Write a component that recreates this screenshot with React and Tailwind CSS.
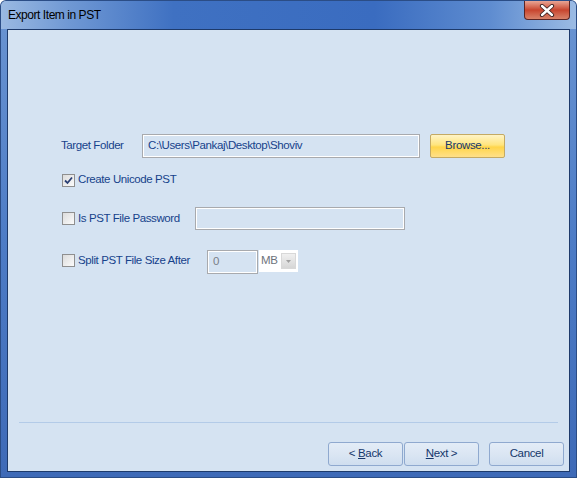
const font = { fontFamily: '"Liberation Sans", Arial, sans-serif' };

const CheckBox = ({ checked }) => (
  <span className="w-[13px] h-[13px] border border-[#8f8f8f] bg-gradient-to-br from-[#dcdcdc] to-[#fbfbfb] flex items-center justify-center shrink-0">
    {checked && (
      <svg width="9" height="9" viewBox="0 0 9 9">
        <path d="M1 4.5 L3.5 7 L8 1.5" fill="none" stroke="#2a3f74" strokeWidth="1.8" />
      </svg>
    )}
  </span>
);

const NavButton = ({ children, className = '' }) => (
  <button className={`h-[24px] w-[75px] rounded-[3px] border border-[#8fa9cf] bg-gradient-to-b from-[#e3ecf7] via-[#dbe6f3] to-[#cfdeef] text-[11.5px] tracking-[-0.35px] text-[#15376b] ${className}`}>
    {children}
  </button>
);

export default function App() {
  return (
    <div style={font} className="w-[577px] h-[478px] flex flex-col bg-[#2b4d86] p-px rounded-t-[6px]">
      <div className="flex-1 flex flex-col rounded-t-[5px] bg-gradient-to-b from-[#6b95d2] via-[#4d7cc6] to-[#3e6ab7]">
        {/* title bar */}
        <div className="h-[28px] flex items-start bg-[linear-gradient(90deg,#9ab9e2_0%,#6f98d4_12%,#3f71c2_30%,#3a6cc0_65%,#5e8cd0_85%,#9bbbe4_100%)] rounded-t-[5px]">
          <span className="pl-[7px] pt-[5px] text-[12px] tracking-[-0.45px] text-black">Export Item in PST</span>
          <div className="ml-auto mr-[6px] w-[46px] h-[19px] rounded-b-[4px] border border-t-0 border-[#5b2525] bg-gradient-to-b from-[#e8a595] via-[#c8442e] to-[#d8826a] flex items-center justify-center">
            <svg width="16" height="13" viewBox="0 0 16 13">
              <path d="M3 2 L13 11 M13 2 L3 11" stroke="#3a2020" strokeWidth="4.2" strokeLinecap="round" />
              <path d="M3 2 L13 11 M13 2 L3 11" stroke="#ffffff" strokeWidth="2.4" strokeLinecap="round" />
            </svg>
          </div>
        </div>
        {/* client */}
        <div className="flex-1 mx-[6px] mb-[5px] border border-[#1d3a6b] bg-[#d5e3f2] flex flex-col text-[11.5px] tracking-[-0.4px] text-[#15428b]">
          <div className="h-[104px]" />
          <div className="flex items-center h-[24px] pl-[53px]">
            <span className="w-[81px]">Target Folder</span>
            <div className="w-[278px] h-[24px] border border-[#a8aaae] bg-[#d5e3f2] flex items-center pl-[5px] shadow-[inset_0_0_0_1px_#ffffff]">
              C:\Users\Pankaj\Desktop\Shoviv
            </div>
            <button className="ml-[10px] w-[75px] h-[24px] rounded-[2px] border border-[#c4aa64] bg-[linear-gradient(180deg,#fff4c6_0%,#ffe57e_45%,#ffd54a_55%,#ffe08a_100%)] text-[#15376b] text-[11.5px] tracking-[-0.35px]">
              Browse...
            </button>
          </div>
          <div className="flex items-center gap-[3px] pl-[54px] mt-[15px] h-[14px]">
            <CheckBox checked />
            <span>Create Unicode PST</span>
          </div>
          <div className="flex items-center pl-[54px] mt-[20px] h-[23px]">
            <div className="flex items-center gap-[3px] w-[133px]">
              <CheckBox />
              <span>Is PST File Password</span>
            </div>
            <div className="w-[210px] h-[23px] border border-[#a8aaae] bg-[#d5e3f2] shadow-[inset_0_0_0_1px_#ffffff]" />
          </div>
          <div className="flex items-start pl-[54px] mt-[20px] h-[24px]">
            <div className="flex items-center gap-[3px] w-[145px] mt-[2px]">
              <CheckBox />
              <span>Split PST File Size After</span>
            </div>
            <div className="w-[51px] h-[24px] border border-[#a8aaae] bg-[#d5e3f2] shadow-[inset_0_0_0_1px_#ffffff] flex items-center pl-[5px] text-[#7a7f88]">
              0
            </div>
            <div className="ml-[1px] w-[39px] h-[22px] bg-white flex items-center pl-[2px] text-[#6d737c]">
              <span>MB</span>
              <span className="ml-auto mr-[2px] w-[15px] h-[16px] bg-gradient-to-b from-[#f0f0f0] to-[#d6d6d6] border border-[#d8d8d8] flex items-center justify-center">
                <svg width="5" height="3" viewBox="0 0 5 3"><path d="M0 0 H5 L2.5 3Z" fill="#a0a0a0" /></svg>
              </span>
            </div>
          </div>
          <div className="flex-1" />
          <div className="mx-[11px] h-px bg-[#b3cbe8]" />
          <div className="h-[19px]" />
          <div className="flex items-center pr-[5px] justify-end">
            <NavButton>&lt; <span className="underline">B</span>ack</NavButton>
            <NavButton className="ml-[1px]"><span className="underline">N</span>ext &gt;</NavButton>
            <NavButton className="ml-[10px]">Cancel</NavButton>
          </div>
          <div className="h-[5px]" />
        </div>
      </div>
    </div>
  );
}
